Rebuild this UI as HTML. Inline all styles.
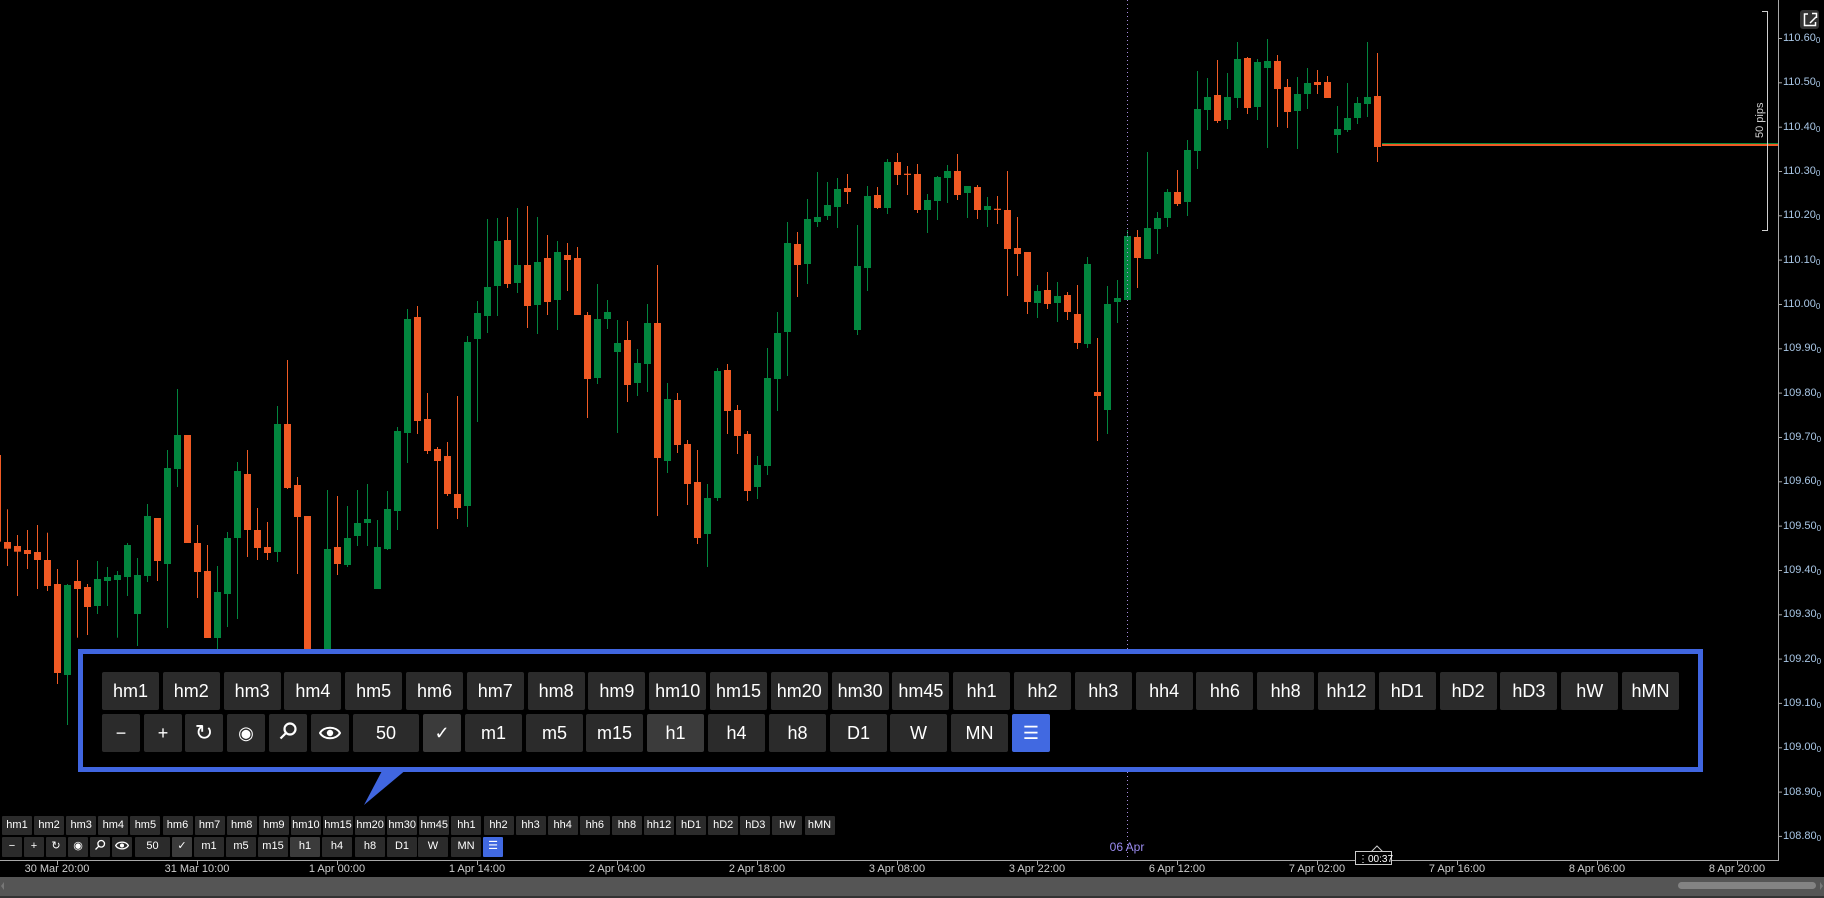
<!DOCTYPE html>
<html><head><meta charset="utf-8">
<style>
*{margin:0;padding:0;box-sizing:border-box}
html,body{width:1824px;height:898px;background:#000;overflow:hidden;font-family:"Liberation Sans",Arial,sans-serif}
#c{position:absolute;left:0;top:0}
.pl{position:absolute;left:1783px;font-size:11px;color:#a9c7e6;line-height:12px}
.pl sub{font-size:8px;vertical-align:-2px}
.tl{position:absolute;top:863px;font-size:11px;color:#cfcfcf;width:80px;margin-left:-40px;text-align:center;line-height:12px}
.pop{position:absolute;left:78px;top:649px;width:1625px;height:123px;border:5px solid #4066e0;background:#000}
.b{position:absolute;background:#2b2b2b;color:#fff;border-radius:2px;text-align:center;font-size:18px}
.b.l{background:#3b3b3b}
.b.bl{background:#4169e1}
.s{position:absolute;background:#2b2b2b;color:#fff;border-radius:1px;text-align:center;font-size:11px;line-height:19px;height:19px}
.s.l{background:#3b3b3b}.s.bl{background:#4169e1}
</style></head><body>
<svg id="c" width="1824" height="898" xmlns="http://www.w3.org/2000/svg">
<g id="cand"></g>
<line x1="1127.5" y1="0" x2="1127.5" y2="858" stroke="#a88be0" stroke-width="1" stroke-dasharray="1,3"/>
<rect x="1382" y="143" width="396" height="1" fill="#0b8a3f"/>
<rect x="1382" y="144" width="396" height="2" fill="#f05a24"/>
<path d="M1762 11.5H1767.5V230.5H1762" fill="none" stroke="#cfcfcf" stroke-width="1"/>
<text x="0" y="0" transform="translate(1763,138) rotate(-90)" font-family="Liberation Sans,sans-serif" font-size="11" fill="#cfcfcf">50 pips</text>
<line x1="1778.5" y1="0" x2="1778.5" y2="861" stroke="#a8a8a8"/>
<line x1="0" y1="860.5" x2="1779" y2="860.5" stroke="#a8a8a8"/>
<g id="ticks" stroke="#a8a8a8"></g>
<rect x="1800" y="10" width="19" height="19" rx="3" fill="#333"/>
<path d="M1808 14H1804.5V25.5H1815.5V22M1810 23L1816 17M1812 13.5H1816.5V18" fill="none" stroke="#fff" stroke-width="1.5"/>
<rect x="0" y="877" width="1824" height="19" fill="#555"/>
<rect x="0" y="896" width="1824" height="2" fill="#333"/>
<rect x="1678" y="882" width="138" height="7" rx="3.5" fill="#838383"/>
<path d="M4 882L1 886L4 890Z" fill="#777"/><path d="M1820 882L1823 886L1820 890Z" fill="#777"/>
<path d="M1371 852L1377 846L1383 852" fill="#000" stroke="#ccc"/>
<rect x="1355.5" y="851.5" width="36" height="13" fill="#000" stroke="#ccc"/>
<path d="M1371 852.5H1383" stroke="#000"/>
<text x="1358" y="862" font-family="Liberation Sans,sans-serif" font-size="10" fill="#fff">⋮00:37</text>
<text x="1127" y="851" text-anchor="middle" font-family="Liberation Sans,sans-serif" font-size="12" fill="#9a8bef">06 Apr</text>
<path d="M383 769L407 769L364 805Z" fill="#4066e0"/>
</svg>
<div id="pl"></div>
<div id="tl"></div>
<div class="pop"></div>
<div id="btns"></div>
<script>
var A=`o,765,1025,765,1025|o,1026,1046,928,1098|o,1038,1055,1005,1188|o,1050,1062,990,1107|o,1056,1080,975,1167|o,1080,1158,998,1173|o,1152,1419,1107,1452|g,1155,1425,1152,1575|o,1143,1167,1080,1313|o,1161,1221,1152,1305|g,1137,1218,1083,1242|g,1131,1143,1101,1218|g,1125,1140,1113,1313|g,1035,1131,1029,1188|g,1125,1242,1074,1338|g,948,1128,912,1146|o,954,1083,954,1143|g,804,1092,750,1284|g,705,807,567,861|o,705,1029,705,1029|o,1029,1116,975,1194|o,1113,1314,1035,1314|g,1176,1314,1098,1350|g,1014,1182,996,1281|g,813,1014,786,1257|o,822,990,750,1071|o,990,1044,924,1080|o,1041,1059,966,1080|g,672,1056,618,1086|o,672,864,480,867|o,855,951,831,1122|o,948,1500,948,1560|o,1500,1600,1450,1650|g,1047,1500,870,1550|o,1041,1092,888,1125|g,1014,1095,918,1101|g,969,1008,870,1038|g,957,969,852,1038|g,1041,1167,960,1167|g,927,1047,873,1050|g,693,933,681,990|g,357,699,327,789|o,351,663,318,702|o,657,753,579,762|o,747,783,741,987|o,768,882,726,888`;
var B=`o,1062,1104,768,1137|g,606,1098,588,1161|g,519,597,483,846|g,441,528,237,579|g,303,438,234,528|o,300,432,231,444|g,375,429,204,459|o,375,498,198,564|g,366,495,231,582|o,354,486,285,525|g,336,480,303,570|o,345,360,309,453|o,354,525,321,525|o,525,717,516,834|g,537,714,432,732|g,516,537,480,567|g,609,636,540,879|o,600,735,543,786|g,669,729,627,768|g,549,672,492,756|o,549,954,375,1128|g,777,963,729,999|o,780,915,759,939|o,912,1032,900,1095|o,1026,1194,930,1212|g,1074,1182,1032,1281|g,693,1074,684,1083|o,690,813,672,882|o,810,888,795,942|o,882,1053,873,1083|g,975,1041,948,1077|g,714,978,624,1005|g,579,717,516,813|g,309,576,246,708|o,312,375,276,471|g,237,372,177,432|g,231,246,96,261|g,195,228,126,240|g,147,201,114,264|o,144,156,102,192|g,378,570,255,585|g,168,384,138,453|o,165,204,141,207|g,66,204,57,222|o,66,105,39,135|o,101,105,78,165|o,102,210,72,219|g,180,210,162,279|g,111,183,108,240|g,93,114,75,189|o,93,165,42,180|g,138,159,138,234|o,141,210,135,237|g,198,210,171,261|o,206,210,168,252|o,210,327,93,468|o,324,342,231,408|o,336,486,336,522|g,453,489,435,534|o,450,492,396,507|g,468,489,426,546|o,465,516,456,540|o,522,609,435,627|g,372,612,351,624|o,756,768,594,903|g,492,810,438,882|g,474,486,420,549|g,288,480,270,480|o,291,354,270,444|g,264,357,36,357|g,234,267,216,342|g,156,234,147,261|o,156,192,90,198|g,30,186,0,228`;
var C=`g,327,453,213,507|g,291,330,234,390|o,285,363,180,369|g,291,360,219,387|g,177,294,126,324|o,174,324,171,342|g,186,321,177,360|g,183,204,117,444|o,183,267,165,381|o,261,336,237,384|g,282,333,231,447|g,249,282,204,327|o,246,255,210,282|o,246,294,228,294|g,387,405,318,459|g,354,390,249,396|g,309,354,291,372|g,291,312,126,351|o,288,441,159,486`;
var s='';
function grp(str,k0,off){str.split('|').forEach(function(r,i){var p=r.split(','),k=k0+i,col=p[0]=='g'?'#02853e':'#f05a24';
var bt=+p[1]/3+off,bb=+p[2]/3+off,wt=+p[3]/3+off,wb=+p[4]/3+off,x=10*k+4;
if(bb-bt<1)bb=bt+1;
s+='<rect x="'+(x+3)+'" y="'+wt.toFixed(1)+'" width="1" height="'+(wb-wt).toFixed(1)+'" fill="'+col+'"/>';
s+='<rect x="'+x+'" y="'+bt.toFixed(1)+'" width="7" height="'+(bb-bt).toFixed(1)+'" fill="'+col+'"/>';});}
grp(A,-1,200);grp(B,45,140);grp(C,119,0);
document.getElementById('cand').innerHTML=s;
var pl='',tk='';
var pr=['110.60','110.50','110.40','110.30','110.20','110.10','110.00','109.90','109.80','109.70','109.60','109.50','109.40','109.30','109.20','109.10','109.00','108.90','108.80'];
pr.forEach(function(p,i){var y=38+i*44.33;pl+='<div class="pl" style="top:'+(y-6).toFixed(1)+'px">'+p+'<sub>0</sub></div>';tk+='<line x1="1779" x2="1782" y1="'+(y+.5).toFixed(1)+'" y2="'+(y+.5).toFixed(1)+'"/>';});
document.getElementById('pl').innerHTML=pl;
var tl=['30 Mar 20:00','31 Mar 10:00','1 Apr 00:00','1 Apr 14:00','2 Apr 04:00','2 Apr 18:00','3 Apr 08:00','3 Apr 22:00','6 Apr 12:00','7 Apr 02:00','7 Apr 16:00','8 Apr 06:00','8 Apr 20:00'],h='';
tl.forEach(function(t,i){var x=57+140*i;h+='<div class="tl" style="left:'+x+'px">'+t+'</div>';tk+='<line x1="'+(x+.5)+'" x2="'+(x+.5)+'" y1="861" y2="865"/>';});
document.getElementById('tl').innerHTML=h;
document.getElementById('ticks').innerHTML=tk;
var r1=['hm1','hm2','hm3','hm4','hm5','hm6','hm7','hm8','hm9','hm10','hm15','hm20','hm30','hm45','hh1','hh2','hh3','hh4','hh6','hh8','hh12','hD1','hD2','hD3','hW','hMN'];
var b='';
r1.forEach(function(t,i){b+='<div class="b" style="left:'+(102+i*60.8).toFixed(1)+'px;top:672px;width:57px;height:38px;line-height:38px">'+t+'</div>';
b+='<div class="s" style="left:'+(2+i*32.1).toFixed(1)+'px;top:816px;width:30px">'+t+'</div>';});
var eye=function(w,h){return '<svg width="'+w+'" height="'+h+'" viewBox="0 0 22 14" style="vertical-align:-1px"><path d="M1 7C5 0 17 0 21 7C17 14 5 14 1 7Z" fill="none" stroke="#fff" stroke-width="2"/><circle cx="11" cy="7" r="3.2" fill="#fff"/></svg>';};
var mag=function(w){return '<svg width="'+w+'" height="'+w+'" viewBox="0 0 20 20" style="vertical-align:-2px"><circle cx="12" cy="8" r="5.5" fill="none" stroke="#fff" stroke-width="2.2"/><path d="M8 12L2.5 17.5" stroke="#fff" stroke-width="2.2"/></svg>';};
var r2=[['−',102,38],['+',144,38],['↻',185,38],['◉',227,38],['MAG',269,38],['EYE',311,38],['50',353,66],['✓',423,38,'l'],['m1',465,57],['m5',526,57],['m15',586,57],['h1',647,57,'l'],['h4',708,57],['h8',769,57],['D1',830,57],['W',890,57],['MN',951,57],['☰',1012,38,'bl']];
r2.forEach(function(a){var cl=a[3]||'';var t=a[0],st=a[0];
if(t=='EYE'){t=eye(22,14);st=eye(14,9);}
if(t=='MAG'){t=mag(20);st=mag(12);}
var fs=(a[0]=='↻')?'font-size:22px;':'';
b+='<div class="b '+cl+'" style="'+fs+'left:'+a[1]+'px;top:714px;width:'+a[2]+'px;height:38px;line-height:38px">'+t+'</div>';
var sx=2+(a[1]-102)*0.5285,sw=Math.round(a[2]*0.5285);
b+='<div class="s '+cl+'" style="left:'+sx.toFixed(0)+'px;top:837px;width:'+sw+'px;height:20px">'+st+'</div>';});
document.getElementById('btns').innerHTML=b;
</script>
</body></html>
